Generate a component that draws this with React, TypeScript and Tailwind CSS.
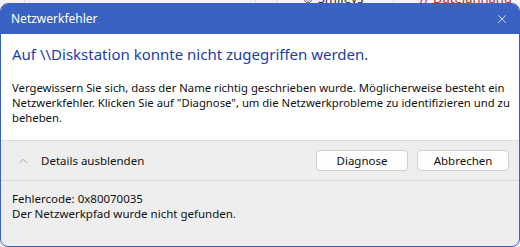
import { X, ChevronUp } from "lucide-react";

const font = { fontFamily: '"Noto Sans", "Open Sans", sans-serif' };

export default function App() {
	return (
		<div className="w-[520px] h-[247px] bg-[#f3f3f3] overflow-hidden flex flex-col" style={font}>
			{/* window behind the dialog */}
			<div className="h-[3px] flex text-[13px] leading-none overflow-hidden">
				<div className="w-[25px] border-r border-[#d6d6d6]" />
				<div className="w-[231px] border-r border-[#d6d6d6]" />
				<div className="w-[21px] border-r border-[#d6d6d6]" />
				<div className="w-[117px] border-r border-[#d6d6d6] pl-[24px] text-[#333] -mt-[8px]">☺ Smileys</div>
				<div className="flex-1 pl-[26px] text-[#c42b1c] -mt-[8px]">// Dateianhang</div>
			</div>
			<div className="flex-1 flex flex-col rounded-t-[8px] rounded-b-[8px] border border-[#3a62c4] overflow-hidden bg-[#eeeeee]">
				<div className="h-[30px] bg-[#3a62c4] flex items-center justify-between pl-[10px] pr-[10px]">
					<span className="text-white text-[12px]">Netzwerkfehler</span>
					<X className="w-[14px] h-[14px] text-white" strokeWidth={1.3} />
				</div>
				<div className="bg-white h-[107px] px-[11px] pt-[10px] border-b border-[#dcdcdc]">
					<h1 className="text-[#1c3dae] text-[15px] leading-[20px]">
						Auf \\Diskstation konnte nicht zugegriffen werden.
					</h1>
					<p className="mt-[16px] text-[11.3px] leading-[15px] text-[#111] whitespace-nowrap">
						Vergewissern Sie sich, dass der Name richtig geschrieben wurde. Möglicherweise besteht ein
						<br />
						Netzwerkfehler. Klicken Sie auf "Diagnose", um die Netzwerkprobleme zu identifizieren und zu
						<br />
						beheben.
					</p>
				</div>
				<div className="h-[40px] flex items-center justify-between pl-[15px] pr-[10px] border-b border-[#d8d8d8]">
					<div className="flex items-center gap-[11px] text-[11.5px] text-[#111]">
						<ChevronUp className="w-[14px] h-[14px] text-[#8a8a8a]" strokeWidth={1.2} />
						<span>Details ausblenden</span>
					</div>
					<div className="flex gap-[9px]">
						<button className="w-[92px] h-[21px] rounded-[4px] border border-[#cfcfcf] bg-[#fdfdfd] text-[11.5px] text-[#111]">
							Diagnose
						</button>
						<button className="w-[92px] h-[21px] rounded-[4px] border border-[#cfcfcf] bg-[#fdfdfd] text-[11.5px] text-[#111]">
							Abbrechen
						</button>
					</div>
				</div>
				<div className="pl-[11px] pt-[10px] text-[11.5px] leading-[15px] text-[#111]">
					<div>Fehlercode: 0x80070035</div>
					<div>Der Netzwerkpfad wurde nicht gefunden.</div>
				</div>
			</div>
		</div>
	);
}
